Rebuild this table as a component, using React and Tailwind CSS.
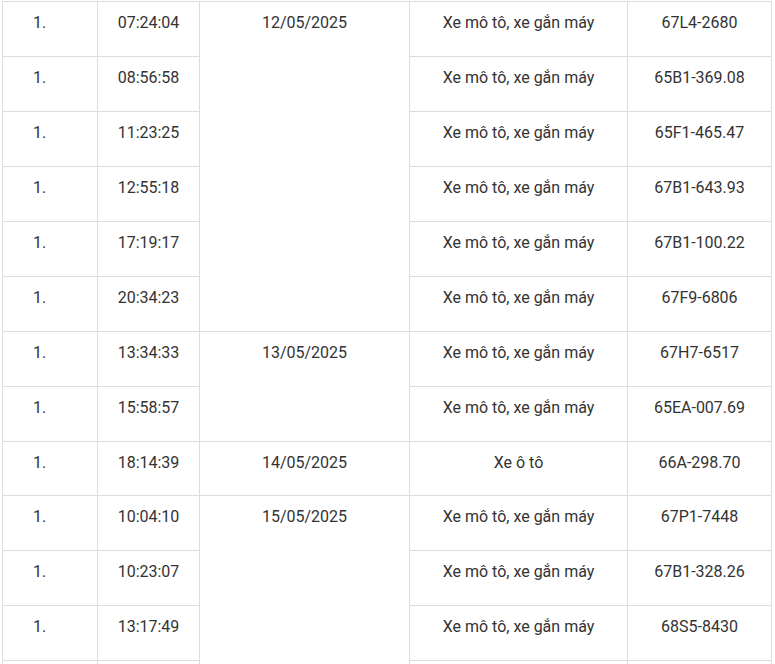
const moto = "Xe mô tô, xe gắn máy";

const days = [
  {
    date: "12/05/2025",
    rows: [
      ["07:24:04", moto, "67L4-2680"],
      ["08:56:58", moto, "65B1-369.08"],
      ["11:23:25", moto, "65F1-465.47"],
      ["12:55:18", moto, "67B1-643.93"],
      ["17:19:17", moto, "67B1-100.22"],
      ["20:34:23", moto, "67F9-6806"],
    ],
  },
  {
    date: "13/05/2025",
    rows: [
      ["13:34:33", moto, "67H7-6517"],
      ["15:58:57", moto, "65EA-007.69"],
    ],
  },
  {
    date: "14/05/2025",
    rows: [["18:14:39", "Xe ô tô", "66A-298.70"]],
  },
  {
    date: "15/05/2025",
    rows: [
      ["10:04:10", moto, "67P1-7448"],
      ["10:23:07", moto, "67B1-328.26"],
      ["13:17:49", moto, "68S5-8430"],
      null, // next row, below the fold
    ],
  },
];

const spans = {
  1: "row-span-1",
  2: "row-span-2",
  4: "row-span-4",
  6: "row-span-6",
};

const cell = "bg-white pt-[9px] leading-6";

export default function App() {
  return (
    <div className="h-[664px] overflow-hidden bg-white">
      <div
        className="mt-[1px] ml-[2px] grid w-[770px] grid-cols-[94px_101px_209px_217px_143px] grid-rows-[repeat(8,54px)_53px_repeat(5,54px)] gap-px bg-[#dddddd] p-px text-[16px] text-[#333333]"
        style={{ fontFamily: "Roboto, 'Noto Sans', sans-serif" }}
      >
        {days.map((day) =>
          day.rows.map((row, i) => (
            <>
              <div key={`${day.date}-${i}-n`} className={`${cell} pl-[30px]`}>
                {row && "1."}
              </div>
              <div key={`${day.date}-${i}-t`} className={`${cell} text-center`}>
                {row && row[0]}
              </div>
              {i === 0 && (
                <div
                  key={`${day.date}-d`}
                  className={`${cell} ${spans[day.rows.length]} text-center`}
                >
                  {day.date}
                </div>
              )}
              <div key={`${day.date}-${i}-k`} className={`${cell} text-center`}>
                {row && row[1]}
              </div>
              <div key={`${day.date}-${i}-p`} className={`${cell} text-center`}>
                {row && row[2]}
              </div>
            </>
          ))
        )}
      </div>
    </div>
  );
}
